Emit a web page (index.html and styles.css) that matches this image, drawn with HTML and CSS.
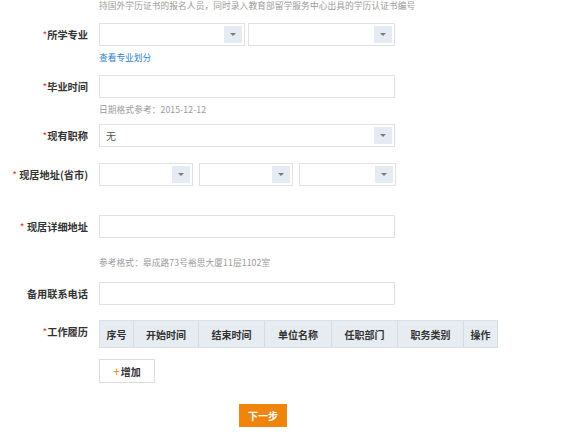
FILE: index.html
```html
<!DOCTYPE html>
<html lang="zh">
<head>
<meta charset="utf-8">
<link rel="stylesheet" href="styles.css">
</head>
<body>
<div class="form">
  <div class="hint top-hint">持国外学历证书的报名人员，同时录入教育部留学服务中心出具的学历认证书编号</div>

  <div class="row r1">
    <label class="label"><span class="req">*</span>所学专业</label>
    <div class="controls">
      <div class="select w146"><span class="val"></span><span class="arrow"></span></div>
      <div class="select w147"><span class="val"></span><span class="arrow"></span></div>
    </div>
  </div>
  <div class="sub link-line"><a class="link">查看专业划分</a></div>

  <div class="row r2">
    <label class="label"><span class="req">*</span>毕业时间</label>
    <div class="controls"><div class="input w296"></div></div>
  </div>
  <div class="sub hint">日期格式参考：2015-12-12</div>

  <div class="row r3">
    <label class="label"><span class="req">*</span>现有职称</label>
    <div class="controls">
      <div class="select w296"><span class="val">无</span><span class="arrow"></span></div>
    </div>
  </div>

  <div class="row r4">
    <label class="label"><span class="req">* </span>现居地址(省市)</label>
    <div class="controls gap6">
      <div class="select w94"><span class="val"></span><span class="arrow"></span></div>
      <div class="select w94"><span class="val"></span><span class="arrow"></span></div>
      <div class="select w97"><span class="val"></span><span class="arrow"></span></div>
    </div>
  </div>

  <div class="row r5">
    <label class="label"><span class="req">* </span>现居详细地址</label>
    <div class="controls"><div class="input w296"></div></div>
  </div>
  <div class="sub hint h3">参考格式：皋成路73号裕思大厦11层1102室</div>

  <div class="row r6">
    <label class="label">备用联系电话</label>
    <div class="controls"><div class="input w296"></div></div>
  </div>

  <div class="row r7">
    <label class="label lbl-top"><span class="req">*</span>工作履历</label>
    <div class="controls">
      <div class="table">
        <div class="th c1">序号</div>
        <div class="th c2">开始时间</div>
        <div class="th c3">结束时间</div>
        <div class="th c4">单位名称</div>
        <div class="th c5">任职部门</div>
        <div class="th c6">职务类别</div>
        <div class="th c7">操作</div>
      </div>
    </div>
  </div>

  <div class="sub add-line"><button class="add"><span class="plus">+</span>增加</button></div>

  <div class="next-line"><button class="next">下一步</button></div>
</div>
</body>
</html>
```

FILE: styles.css
```css
* { box-sizing: border-box; }
html, body { margin: 0; padding: 0; background: #fff; }
body {
  font-family: "Noto Sans CJK SC", "Liberation Sans", sans-serif;
  color: #333;
  width: 585px;
  height: 441px;
  overflow: hidden;
}
.form { padding: 0; }

.hint { color: #9a9a9a; font-size: 8.7px; letter-spacing: 0.1px; }
.top-hint { height: 12px; line-height: 12px; padding-left: 99px; }

.row { display: flex; align-items: center; }
.label {
  width: 88px;
  text-align: right;
  font-size: 10.2px;
  font-weight: bold;
  color: #333;
  line-height: 14px;
  white-space: nowrap;
}
.req { color: #e4393c; font-weight: normal; }
.controls { margin-left: 11px; display: flex; gap: 3px; }
.controls.gap6 { gap: 6px; }

.select, .input {
  height: 23px;
  border: 1px solid #e1e1e1;
  background: #fff;
  position: relative;
  display: flex;
  align-items: center;
}
.w146 { width: 146px; }
.w147 { width: 147px; }
.w296 { width: 296px; }
.w94 { width: 94px; }
.w97 { width: 97px; }
.val { font-size: 10px; color: #555; padding-left: 6px; flex: 1; }
.arrow {
  width: 18px;
  height: 17px;
  margin-right: 2px;
  background: #e5ebf2;
  display: flex;
  align-items: center;
  justify-content: center;
}
.arrow::after {
  content: "";
  border-left: 3px solid transparent;
  border-right: 3px solid transparent;
  border-top: 3px solid #7a7a7a;
}

.sub { padding-left: 99px; line-height: 14px; height: 14px; font-size: 8.7px; }
.link-line { margin-top: 5px; }
.link { color: #2f7fc8; font-size: 8.7px; }

.r1 { margin-top: 11px; }
.r2 { margin-top: 10px; }
.sub.hint { margin-top: 5px; }
.r3 { margin-top: 7px; }
.r4 { margin-top: 16px; }
.r5 { margin-top: 29px; }
.sub.h3 { margin-top: 18px; }
.r6 { margin-top: 12px; }
.r7 { margin-top: 15px; align-items: flex-start; }
.lbl-top { margin-top: 5px; }

.table {
  display: flex;
  height: 28px;
  background: #e6ecf2;
  border: 1px solid #d9e0e7;
}
.th {
  display: flex;
  align-items: center;
  justify-content: center;
  font-size: 10px;
  font-weight: bold;
  color: #333;
  border-left: 1px solid #d3dbe3;
}
.th.c1 { border-left: none; width: 33px; }
.c2 { width: 65px; }
.c3 { width: 66px; }
.c4 { width: 67px; }
.c5 { width: 66px; }
.c6 { width: 66px; }
.c7 { width: 34px; }

.add-line { margin-top: 11px; height: 24px; }
.add {
  width: 56px;
  height: 24px;
  border: 1px solid #dcdcdc;
  background: #fff;
  font-family: inherit;
  font-size: 10px;
  font-weight: bold;
  color: #333;
  padding: 0;
  display: flex;
  align-items: center;
  justify-content: center;
}
.plus { color: #f0850d; font-weight: normal; font-size: 12px; margin-right: 1px; line-height: 1; }

.next-line { margin-top: 21px; padding-left: 239px; height: 23px; }
.next {
  display: block;
  width: 48px;
  height: 23px;
  border: none;
  background: #f0850d;
  color: #fff;
  font-family: inherit;
  font-size: 10px;
  font-weight: bold;
  padding: 0;
}
```
